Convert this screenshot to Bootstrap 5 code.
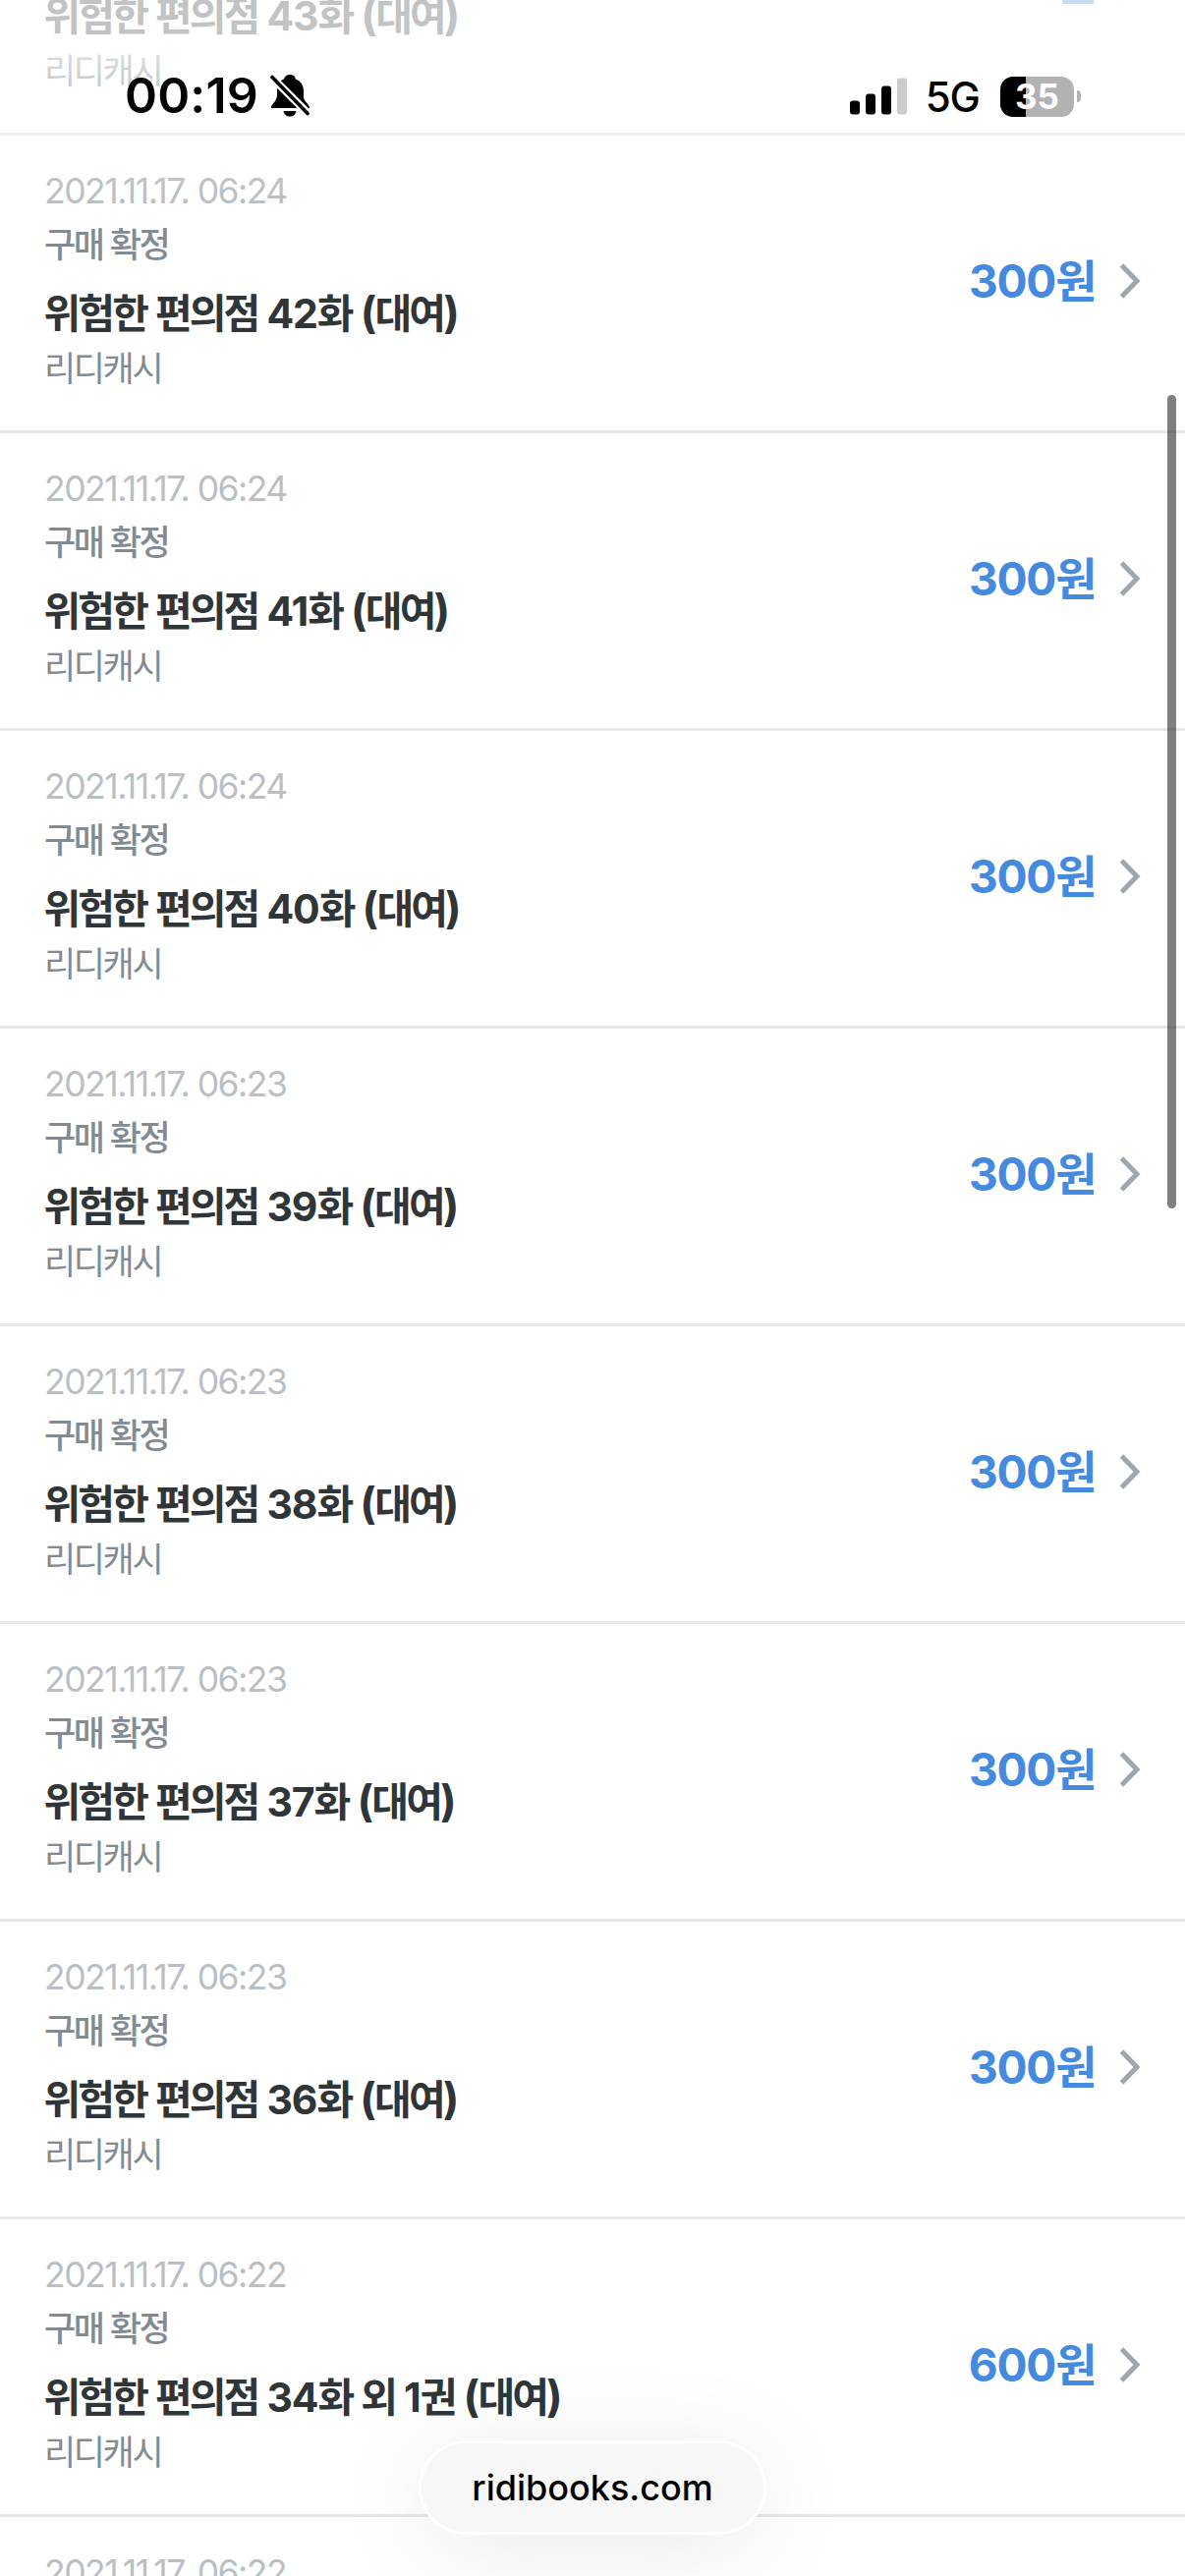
<!DOCTYPE html>
<html lang="ko">
<head>
<meta charset="utf-8">
<meta name="viewport" content="width=device-width, initial-scale=1">
<title>ridibooks.com</title>
<link href="https://cdn.jsdelivr.net/npm/bootstrap@5.3.0/dist/css/bootstrap.min.css" rel="stylesheet">
<style>
  html, body { height: 2622px; overflow: hidden; }
  body { background: #fff; font-family: Inter, "Noto Sans CJK KR", sans-serif; }
  .orders { margin-top: -165px; height: 2787px; overflow: hidden; }
  .order { height: 303px; border-bottom: 3px solid #e6e7eb; padding: 30px 45px 0 45px; font-family: "Noto Sans CJK KR", sans-serif; white-space: nowrap; }
  .when { font: 400 35.5px/54px Inter, sans-serif; letter-spacing: -1.5px; color: #b9bfc4; }
  .state { font-size: 35px; line-height: 54px; font-weight: 500; letter-spacing: -2.5px; color: #828b94; margin-top: -2.5px; }
  .title { font-size: 41px; line-height: 60px; font-weight: 700; letter-spacing: -2.9px; word-spacing: .4px; margin-top: 12px; margin-left: -.5px; color: #303538; }
  .title span { font-family: Inter, sans-serif; letter-spacing: -1.05px; }
  .title .par { font-size: 44px; line-height: 1; letter-spacing: -1.7px; }
  .pay { font-size: 35px; line-height: 52px; font-weight: 400; letter-spacing: -2.4px; color: #828b94; margin-top: -2px; }
  .cost { font: 700 46px/60px "Noto Sans CJK KR", sans-serif; color: #448bdf; margin-top: -3px; }
  .cost span { font-family: Inter, sans-serif; letter-spacing: -1.2px; }
  .act { margin-top: -35px; }
  .chev { width: 20px; height: 36px; margin: 0 1px 0 23.500px; overflow: visible; fill: none; stroke: #9ea7ad; stroke-width: 5; }
  .statusbar { height: 200px; z-index: 10; padding: 72px 106px 0 127px; color: #000;
    background: linear-gradient(rgba(255,255,255,.7) 0, rgba(255,255,255,.7) 55px, rgba(255,255,255,.55) 87px, rgba(255,255,255,.3) 135px, rgba(255,255,255,0) 200px); }
  .clock { font-size: 50px; line-height: 50px; font-weight: 600; letter-spacing: .2px; }
  .bell { margin-left: 12px; }
  .net { font-size: 42px; line-height: 50px; font-weight: 500; letter-spacing: -1px; margin: 2px 0 0 19px; }
  .batt { width: 75px; height: 41px; border-radius: 13px; background: linear-gradient(90deg, #000 26px, #b2b2b2 26px); color: #fff; font-size: 35px; line-height: 41px; font-weight: 700; margin-left: 21px; }
  .nub { width: 4px; height: 12px; background: #b2b2b2; border-radius: 0 4px 4px 0; margin-left: 3px; }
  .thumb { left: 1188px; top: 402px; width: 9px; height: 828px; border-radius: 5px; background: rgba(0,0,0,.5); z-index: 5; }
  .site { left: 426px; top: 2484px; width: 354px; height: 96px; border: 3px solid #fff; border-radius: 48px; background: #f7f7f8; color: #000; font-size: 36px; font-weight: 500; z-index: 5; box-shadow: 0 12px 100px rgba(0,0,0,.09); }
</style>
</head>
<body class="position-relative">
<header class="statusbar position-absolute top-0 start-0 w-100 d-flex align-items-start justify-content-between">
  <div class="d-flex align-items-center">
    <span class="clock">00:19</span>
    <svg class="bell" width="40" height="44" viewBox="0 0 40 44"><path d="M20 1c3.500 0 5.500 2 6 4.500 5.500 2 8 7 8 12.500v6c0 4 6 7 6 11H1c0-5 6-6 6-14v-4C7 11 9 7.500 14 5.500 14.500 3 16.500 1 20 1z"/><path d="M13.500 38h13c-.5 3.500-3 5.500-6.500 5.500s-6-2-6.500-5.500z"/><path d="M1 3l38 38" stroke="#fff" stroke-width="8"/><path d="M2 3.500l36 37" stroke="#000" stroke-width="3.600" stroke-linecap="round"/></svg>
  </div>
  <div class="d-flex align-items-center">
    <svg width="58" height="38" viewBox="0 0 58 38"><rect y="23.500" width="10" height="14" rx="3"/><rect x="16" y="16.500" width="10" height="21" rx="3"/><rect x="32" y="8.500" width="10" height="29" rx="3"/><rect x="48" y=".5" width="10" height="37" rx="3" fill="#ccc"/></svg>
    <span class="net">5G</span>
    <span class="batt text-center">35</span><span class="nub"></span>
  </div>
</header>

<main class="orders">
  <section class="order d-flex justify-content-between">
    <div><div class="when">2021.11.17. 06:24</div><div class="state">구매 확정</div><div class="title">위험한 편의점 <span>43</span>화 <span class="par">(</span>대여<span class="par">)</span></div><div class="pay">리디캐시</div></div>
    <div class="act d-flex align-items-center"><div class="cost"><span>300</span>원</div><svg class="chev" viewBox="0 0 20 36"><path d="M1.500 2L17 18 1.500 34"/></svg></div>
  </section>
  <section class="order d-flex justify-content-between">
    <div><div class="when">2021.11.17. 06:24</div><div class="state">구매 확정</div><div class="title">위험한 편의점 <span>42</span>화 <span class="par">(</span>대여<span class="par">)</span></div><div class="pay">리디캐시</div></div>
    <div class="act d-flex align-items-center"><div class="cost"><span>300</span>원</div><svg class="chev" viewBox="0 0 20 36"><path d="M1.500 2L17 18 1.500 34"/></svg></div>
  </section>
  <section class="order d-flex justify-content-between">
    <div><div class="when">2021.11.17. 06:24</div><div class="state">구매 확정</div><div class="title">위험한 편의점 <span>41</span>화 <span class="par">(</span>대여<span class="par">)</span></div><div class="pay">리디캐시</div></div>
    <div class="act d-flex align-items-center"><div class="cost"><span>300</span>원</div><svg class="chev" viewBox="0 0 20 36"><path d="M1.500 2L17 18 1.500 34"/></svg></div>
  </section>
  <section class="order d-flex justify-content-between">
    <div><div class="when">2021.11.17. 06:24</div><div class="state">구매 확정</div><div class="title">위험한 편의점 <span>40</span>화 <span class="par">(</span>대여<span class="par">)</span></div><div class="pay">리디캐시</div></div>
    <div class="act d-flex align-items-center"><div class="cost"><span>300</span>원</div><svg class="chev" viewBox="0 0 20 36"><path d="M1.500 2L17 18 1.500 34"/></svg></div>
  </section>
  <section class="order d-flex justify-content-between">
    <div><div class="when">2021.11.17. 06:23</div><div class="state">구매 확정</div><div class="title">위험한 편의점 <span>39</span>화 <span class="par">(</span>대여<span class="par">)</span></div><div class="pay">리디캐시</div></div>
    <div class="act d-flex align-items-center"><div class="cost"><span>300</span>원</div><svg class="chev" viewBox="0 0 20 36"><path d="M1.500 2L17 18 1.500 34"/></svg></div>
  </section>
  <section class="order d-flex justify-content-between">
    <div><div class="when">2021.11.17. 06:23</div><div class="state">구매 확정</div><div class="title">위험한 편의점 <span>38</span>화 <span class="par">(</span>대여<span class="par">)</span></div><div class="pay">리디캐시</div></div>
    <div class="act d-flex align-items-center"><div class="cost"><span>300</span>원</div><svg class="chev" viewBox="0 0 20 36"><path d="M1.500 2L17 18 1.500 34"/></svg></div>
  </section>
  <section class="order d-flex justify-content-between">
    <div><div class="when">2021.11.17. 06:23</div><div class="state">구매 확정</div><div class="title">위험한 편의점 <span>37</span>화 <span class="par">(</span>대여<span class="par">)</span></div><div class="pay">리디캐시</div></div>
    <div class="act d-flex align-items-center"><div class="cost"><span>300</span>원</div><svg class="chev" viewBox="0 0 20 36"><path d="M1.500 2L17 18 1.500 34"/></svg></div>
  </section>
  <section class="order d-flex justify-content-between">
    <div><div class="when">2021.11.17. 06:23</div><div class="state">구매 확정</div><div class="title">위험한 편의점 <span>36</span>화 <span class="par">(</span>대여<span class="par">)</span></div><div class="pay">리디캐시</div></div>
    <div class="act d-flex align-items-center"><div class="cost"><span>300</span>원</div><svg class="chev" viewBox="0 0 20 36"><path d="M1.500 2L17 18 1.500 34"/></svg></div>
  </section>
  <section class="order d-flex justify-content-between">
    <div><div class="when">2021.11.17. 06:22</div><div class="state">구매 확정</div><div class="title">위험한 편의점 <span>34</span>화 외 <span>1</span>권 <span class="par">(</span>대여<span class="par">)</span></div><div class="pay">리디캐시</div></div>
    <div class="act d-flex align-items-center"><div class="cost"><span>600</span>원</div><svg class="chev" viewBox="0 0 20 36"><path d="M1.500 2L17 18 1.500 34"/></svg></div>
  </section>
  <section class="order d-flex justify-content-between">
    <div><div class="when">2021.11.17. 06:22</div></div>
  </section>
</main>
<div class="thumb position-absolute"></div>
<div class="site position-absolute d-flex align-items-center justify-content-center">ridibooks.com</div>
<script src="https://cdn.jsdelivr.net/npm/bootstrap@5.3.0/dist/js/bootstrap.bundle.min.js"></script>
</body>
</html>
